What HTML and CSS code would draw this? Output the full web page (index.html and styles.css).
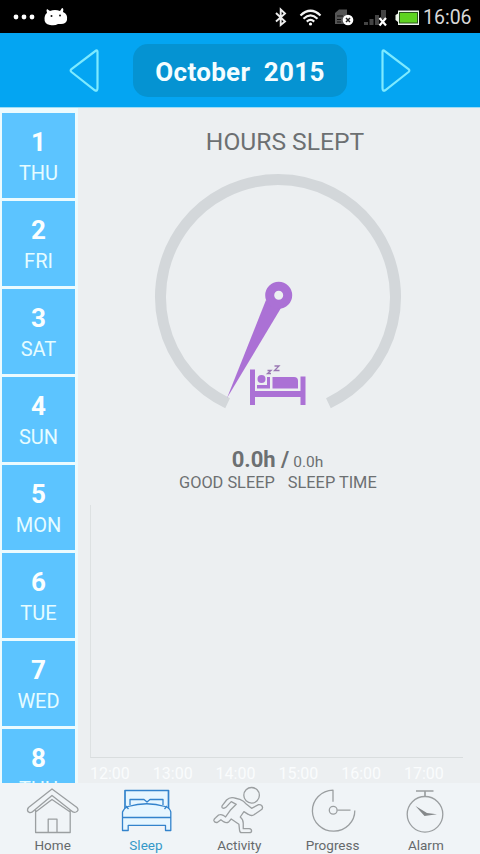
FILE: index.html
```html
<!DOCTYPE html>
<html lang="en">
<head>
<meta charset="utf-8">
<title>Sleep</title>
<link rel="stylesheet" href="styles.css">
</head>
<body>
<div class="app">
  <div class="status">
    <svg class="status-left" width="70" height="33" viewBox="0 0 70 33">
      <g fill="#fff"><circle cx="16" cy="17" r="2.4"/><circle cx="24" cy="17" r="2.4"/><circle cx="32" cy="17" r="2.4"/>
      <path d="M47 13Q46 10 47 9L50 11Q55 9 60 11L62 8Q64 8 63 12Q68 14 67 20Q66 24 61 24L58 24Q55 26 50 25Q44 24 44.500 18Q45 14 47 13Z"/></g>
      <circle cx="51.500" cy="16" r="1" fill="#111"/><circle cx="60" cy="15.500" r="1" fill="#111"/>
    </svg>
    <svg class="status-icons" width="152" height="33" viewBox="270 0 152 33">
      <path d="M276 13L285 21.500L280.700 25V9.500L285 13.500L276 21.500" fill="none" stroke="#eee" stroke-width="1.900"/>
      <g fill="none" stroke="#f4f4f4" stroke-width="2.200"><path d="M300.500 15.500Q310.500 6 320.500 15.500"/><path d="M303.500 18.700Q310.500 12 317.500 18.700"/><path d="M306.800 21.600Q310.500 18 314.200 21.600"/></g>
      <circle cx="310.500" cy="24" r="1.600" fill="#fff"/>
      <path d="M335 13L339 9.500H347V24H335Z" fill="#555"/><path d="M337 16H343M337 19.500H341M337 22H341" stroke="#111"/>
      <circle cx="348" cy="20" r="5.300" fill="#fff"/><path d="M346 18L350 22M350 18L346 22" stroke="#222" stroke-width="1.500"/>
      <path d="M364 22h4v3h-4zM369.500 19h4v6h-4zM375 15h4v10h-4zM381 10h5v9h-5z" fill="#444"/>
      <path d="M379.500 18L386 25.500M386 18L379.500 25.500" stroke="#fff" stroke-width="2.200"/>
      <path d="M398 10.500H419V25H398V22L395.500 20V15L398 13.500Z" fill="#eef5ea"/><rect x="399.500" y="12.500" width="18" height="10.500" fill="#5ed321" stroke="#2b551c"/>
    </svg>
    <span class="clock">16:06</span>
  </div>
  <header class="month-bar">
    <svg width="30" height="44" viewBox="0 0 30 44"><path d="M27 1.500Q28.500 1 28.500 3V39Q28.500 43 25.500 41L2.500 23Q.800 21.500 2.500 20Z"/></svg>
    <div class="month">October&nbsp; 2015</div>
    <svg width="30" height="44" viewBox="0 0 30 44"><path d="M3 1.500Q1.500 1 1.500 3V39Q1.500 43 4.500 41L27.500 23Q29.200 21.500 27.500 20Z"/></svg>
  </header>
  <div class="body">
    <aside class="days">
      <div class="day"><b>1</b><span>THU</span></div>
      <div class="day"><b>2</b><span>FRI</span></div>
      <div class="day"><b>3</b><span>SAT</span></div>
      <div class="day"><b>4</b><span>SUN</span></div>
      <div class="day"><b>5</b><span>MON</span></div>
      <div class="day"><b>6</b><span>TUE</span></div>
      <div class="day"><b>7</b><span>WED</span></div>
      <div class="day"><b>8</b><span>THU</span></div>
    </aside>
    <main class="main">
      <h1>HOURS SLEPT</h1>
      <svg class="gauge" width="250" height="240" viewBox="153 172 250 240">
        <path d="M227.600 403.200A117.500 117.500 0 1 1 328.400 403.200" fill="none" stroke="#d3d7da" stroke-width="11"/>
        <path d="M266 300L227 398L281 308Z" fill="#ab71d5"/>
        <circle cx="278.700" cy="295.300" r="9" fill="#eceff1" stroke="#ab71d5" stroke-width="9"/>
        <g fill="#ab71d5">
          <path d="M250 369.500H255V391H300.500V376.500H305.500V405H300.500V397H255V405H250Z"/>
          <circle cx="261.500" cy="379" r="4"/><path d="M257 385H267V377H270V388.500H257Z"/>
          <path d="M272.500 377H294Q298 377 298 381V388.500H272.500Z"/>
        </g>
        <path d="M267.500 370.500H271L267.500 373.500H271M274.500 366H279L274.500 370.500H279.500" fill="none" stroke="#9a78b3" stroke-width="1.300"/>
      </svg>
      <div class="hours"><b>0.0h /</b> <span>0.0h</span></div>
      <div class="captions"><span>GOOD SLEEP</span><span>SLEEP TIME</span></div>
      <div class="plot"></div>
      <div class="ticks"><span>12:00</span><span>13:00</span><span>14:00</span><span>15:00</span><span>16:00</span><span>17:00</span></div>
    </main>
  </div>
  <nav class="tabs">
    <div class="tab">
      <svg width="60" height="50" viewBox="0 0 60 50"><path d="M29 4L5.500 22.500Q3 26 6.500 27.500Q8.500 28 11 25.500L29 10.500L48 25.500Q50.500 28 53 27Q56.500 25.500 54 22.500Z"/><path d="M12.600 25V47.500H47.200V25M12.600 27L29 14.500L47.200 27M25.200 47.500V34.200H34V47.500"/></svg>
      <span>Home</span>
    </div>
    <div class="tab active">
      <svg width="60" height="50" viewBox="0 0 60 50"><path d="M9 24V5.500H52.500V24" stroke-width="1.700"/><path d="M14 20V14.500H28L31 17L34 14.500H47V20"/><path d="M6.500 45.500V27Q8 23 12 21.500Q31 16 49 21.500Q54 23 54.800 27V45.500H49.500V40.300H12.200V45.500ZM6.500 32.500H54.800M12.500 24L10 21M48.500 24L51 21"/></svg>
      <span>Sleep</span>
    </div>
    <div class="tab">
      <svg width="60" height="50" viewBox="0 0 60 50"><circle cx="42.600" cy="10.300" r="7.800"/><g transform="translate(-19.750 -5) scale(.3333)" class="runner"><path d="M99 77L112 60Q122 50 136 54L152 58Q163 62 172 73L187 85L208 74Q219 73 220 83Q220 87 214 91L193 105Q185 109 177 103L164 95L153 111Q162 118 162 130V146H180Q187 147 187 153Q187 158 180 158H157Q152 158 151 151L149 133L126 117L119 125Q112 131 103 125L95 119L85 127Q77 129 74 122Q73 118 79 113L88 105Q95 102 102 106L109 111L123 91L141 73L126 65L110 82Q104 87 99 83Q97 80 99 77Z"/></g></svg>
      <span>Activity</span>
    </div>
    <div class="tab">
      <svg width="60" height="50" viewBox="0 0 60 50"><path d="M30 16.800V5.200A21.200 20.500 0 1 0 51.800 25.500M34.400 25.200H47.500"/><circle cx="30.200" cy="25.300" r="3.900"/></svg>
      <span>Progress</span>
    </div>
    <div class="tab">
      <svg width="60" height="50" viewBox="0 0 60 50"><circle cx="29" cy="29.300" r="17.800"/><path d="M20 6H37.500M29 6V11.500" stroke-width="1.700"/><path d="M19.500 21L31 28L41 29.300L28.500 31Z" class="hands"/></svg>
      <span>Alarm</span>
    </div>
  </nav>
</div>
</body>
</html>
```

FILE: styles.css
```css
* { box-sizing: border-box; }
body { margin: 0; font-family: Roboto, "Liberation Sans", sans-serif; }
svg { display: block; flex: none; }
.app {
  width: 480px;
  height: 854px;
  display: flex;
  flex-direction: column;
  overflow: hidden;
  background: #eceff1;
}
.status {
  height: 33px;
  flex: none;
  display: flex;
  align-items: center;
  background: #000;
}
.status-icons { margin-left: 200px; }
.clock { margin-left: 1px; padding-top: 3px; font-size: 19.500px; line-height: 30px; color: #d8d8d8; }
.month-bar {
  height: 75px;
  flex: none;
  display: flex;
  justify-content: center;
  align-items: center;
  gap: 34px;
  padding-top: 1px;
  border-bottom: 1px solid #9fdcf5;
  background: #04a5f2;
}
.month-bar svg { fill: none; stroke: #7deaff; stroke-width: 2.200px; }
.month {
  width: 214px;
  height: 53px;
  border-radius: 15px;
  background: #0593d2;
  color: #f4fdff;
  font-size: 26px;
  font-weight: 700;
  line-height: 57px;
  letter-spacing: .3px;
  text-align: center;
  white-space: nowrap;
}
.body { height: 675px; flex: none; display: flex; overflow: hidden; }
.days {
  width: 78px;
  flex: none;
  display: flex;
  flex-direction: column;
  gap: 3px;
  padding: 5px 3px 0 2px;
  background: #ecfbfe;
}
.day {
  height: 85px;
  flex: none;
  display: flex;
  flex-direction: column;
  align-items: center;
  padding-top: 13px;
  background: #5cc4ff;
  color: #e6fcff;
}
.day b { font-size: 26px; line-height: 32px; color: #fafeff; }
.day span { font-size: 20px; line-height: 30px; }
.main { flex: 1; display: flex; flex-direction: column; color: #6c7072; }
.main > * { flex: none; }
h1 {
  margin: 18px 0 0 12px;
  font-size: 24.600px;
  font-weight: 400;
  line-height: 32px;
  text-align: center;
}
.gauge { margin: 14px 0 0 75px; }
.hours { height: 30px; margin-top: 33px; padding-right: 3px; line-height: 30px; text-align: center; }
.hours b { font-size: 22px; }
.hours span { font-size: 15.500px; }
.captions { display: flex; gap: 13px; height: 22px; margin: -3px 0 0 101px; font-size: 16.350px; line-height: 22px; white-space: nowrap; }
.plot {
  width: 373px;
  height: 253px;
  margin: 11px 0 0 12px;
  border-left: 1px solid #dde1e2;
  border-bottom: 1px solid #d9ddde;
}
.ticks { display: flex; margin: 5px 0 0 12px; font-size: 16px; line-height: 22px; color: #fafcfd; }
.ticks span { width: 62.800px; flex: none; }
.tabs {
  height: 71px;
  flex: none;
  display: grid;
  grid-template-columns: repeat(5, 93.300px);
  padding: 2px 0 0 6px;
  background: #f0f4f7;
}
.tab { display: flex; flex-direction: column; align-items: center; color: #65696b; font-size: 13.500px; line-height: 21px; }
.tab svg { fill: none; stroke: #9b9fa1; stroke-width: 1.300px; stroke-linejoin: round; }
.tab.active { color: #3498c8; }
.tab.active svg { stroke: #3383cc; fill: #e6f6ff; }
.tab .runner { stroke-width: 3.900px; }
.tab .hands { fill: #85898b; stroke: none; }
```
